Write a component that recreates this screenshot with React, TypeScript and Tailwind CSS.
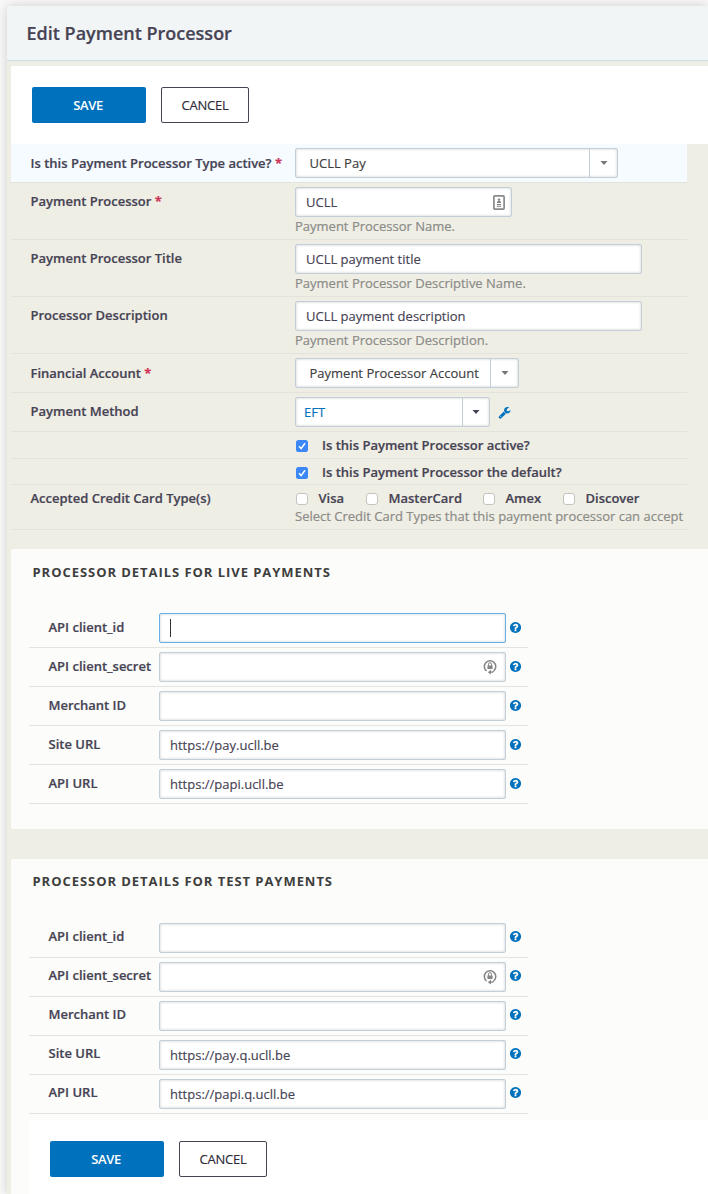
import type { ReactNode } from "react";

const LABEL = "text-[13px] leading-[18px] font-semibold text-[#464354] whitespace-nowrap [-webkit-text-stroke:0.2px_#464354]";
const FIELD =
  "flex h-[30px] items-center rounded-[2px] border bg-white text-[13px] text-[#464354] whitespace-nowrap [-webkit-text-stroke:0.15px_currentColor] shadow-[inset_0_0_3px_rgba(0,0,0,0.2)]";

function HelpIcon() {
  return (
    <svg viewBox="0 0 1792 1792" className="size-[13px] fill-[#0071bd]">
      <path d="M1024 1376v-192q0-14-9-23t-23-9h-192q-14 0-23 9t-9 23v192q0 14 9 23t23 9h192q14 0 23-9t9-23zM1280 704q0-88-55.5-163t-138.5-116-170-41q-243 0-371 213-15 24 8 42l132 100q7 6 19 6 16 0 25-12 53-68 86-92 34-24 86-24 48 0 85.5 26t37.5 59q0 38-20 61t-68 45q-63 28-115.5 86.5t-52.5 125.5v36q0 14 9 23t23 9h192q14 0 23-9t9-23q0-19 21.5-49.5t54.5-49.5q32-18 49-28.5t46-35 44.5-48 28-60.5 12.5-81zM1664 896q0 209-103 385.5t-279.5 279.5-385.5 103-385.5-103-279.5-279.5-103-385.5 103-385.5 279.5-279.5 385.5-103 385.5 103 279.5 279.5 103 385.5z" />
    </svg>
  );
}

function WrenchIcon() {
  return (
    <svg viewBox="0 0 1792 1792" className="size-[13px] fill-[#0071bd]">
      <path d="M448 1472q0-26-19-45t-45-19-45 19-19 45 19 45 45 19 45-19 19-45zm644-420l-682 682q-37 37-90 37-52 0-91-37l-106-108q-38-36-38-90 0-53 38-91l681-681q39 98 114.5 173.5t173.5 114.5zm634-435q0 39-23 106-47 134-164.5 217.5t-258.5 83.5q-185 0-316.5-131.5t-131.5-316.5 131.5-316.5 316.5-131.5q58 0 121.5 16.5t107.5 46.5q16 11 16 28t-16 28l-293 169v224l193 107q5-3 79-48.5t135.5-81 70.5-35.5q15 0 23.5 10t8.5 25z" />
    </svg>
  );
}

function ContactIcon() {
  return (
    <svg viewBox="0 0 12 15" className="h-[15px] w-[12px]">
      <rect x="0.9" y="0.9" width="10.2" height="13.2" rx="0.8" fill="#fff" stroke="#8a8a8a" strokeWidth="1.7" />
      <circle cx="6" cy="4.6" r="1.2" fill="#808080" />
      <path d="M4 8V7l1.2-1.3h1.6L8 7v1zM3.8 9h4.4v1H3.8zM3.8 10.7h4.4v1H3.8z" fill="#808080" />
    </svg>
  );
}

function LockIcon() {
  return (
    <svg viewBox="0 0 14 16" className="h-[16px] w-[14px]" fill="none">
      <path d="M3.6 12A5.7 5.7 0 1 1 11 11.6" stroke="#858585" strokeWidth="1.5" />
      <path d="M7.6 13.2H9.6L11 11.6" stroke="#858585" strokeWidth="1.3" />
      <path d="M8 10.8v4.8L4.8 13.2z" fill="#858585" />
      <path d="M5.5 7V5.2a1.5 1.5 0 0 1 3 0V7" stroke="#858585" />
      <rect x="4.4" y="6.4" width="5.2" height="3.6" rx=".4" fill="#858585" />
    </svg>
  );
}

function Buttons() {
  return (
    <div className="flex gap-[15px] text-[13px] leading-none">
      <button className="h-9 w-[114px] rounded-[2px] bg-[#0071bd] pt-px pr-[2px] font-semibold tracking-[-0.35px] text-white">SAVE</button>
      <button className="h-9 w-[88px] rounded-[2px] border border-[#464354] bg-white pt-px tracking-[-0.2px] text-[#2d2b35] [-webkit-text-stroke:0.15px_currentColor]">CANCEL</button>
    </div>
  );
}

function Row({ label, required, height, pad = "pt-[10px]", active, children }: {
  label?: string; required?: boolean; height: string; pad?: string; active?: boolean; children: ReactNode;
}) {
  return (
    <div className={`flex w-[676px] border-b ${height} ${active ? "border-[#e0e3df] bg-[#f5fbff]" : "border-[#e3e3dd]"}`}>
      <div className={`w-[284px] shrink-0 pl-[19.5px] ${pad} ${LABEL}`}>
        {label}
        {required && <span className="font-bold text-[#cf3458] [-webkit-text-stroke:0.2px_#cf3458]"> *</span>}
      </div>
      <div className="min-w-0 flex-1">{children}</div>
    </div>
  );
}

function Select({ value, width, arrow, dark }: { value: string; width: string; arrow: string; dark?: boolean }) {
  return (
    <div className={`${FIELD} border-[#c2cfd8] ${width}`}>
      <span className={`flex-1 pt-px ${dark ? "pl-2 text-[#0071bd]" : "pl-[13.5px] text-[#3e3e3e]"}`}>{value}</span>
      <span className={`flex h-full items-center justify-center border-l border-[#c2cfd8] ${arrow}`}>
        <svg viewBox="0 0 8 4" className="h-1 w-2">
          <path d="M0.5 0h7L4 4z" fill={dark ? "#464354" : "#777"} />
        </svg>
      </span>
    </div>
  );
}

function Hint({ children }: { children: ReactNode }) {
  return <div className="text-[13px] leading-[18px] whitespace-nowrap text-[#8b8b88] [-webkit-text-stroke:0.2px_currentColor]">{children}</div>;
}

function Check({ on }: { on?: boolean }) {
  return on ? (
    <svg viewBox="0 0 12 12" className="size-3 shrink-0">
      <rect width="12" height="12" rx="2.5" fill="#3b87f7" />
      <path d="M3 6.3l2.1 2.3L9 3.3" fill="none" stroke="#fff" strokeWidth="1.5" />
    </svg>
  ) : (
    <span className="size-3 shrink-0 rounded-[3px] border border-[#c4c4c1] bg-white" />
  );
}

function CheckRow({ text, height }: { text: string; height: string }) {
  return (
    <Row height={height}>
      <div className={`flex gap-[14.5px] pt-1 pl-[0.5px] ${LABEL}`}>
        <span className="flex pt-1"><Check on /></span>
        {text}
      </div>
    </Row>
  );
}

const cards = [
  { name: "Visa", width: "w-[70px]" },
  { name: "MasterCard", width: "w-[117px]" },
  { name: "Amex", width: "w-[80px]" },
  { name: "Discover", width: "w-[80px]" },
];

const live = { heading: "pt-[14px]", label: "pt-[5px]", help: "pt-2" };
const test = { heading: "pt-[13px]", label: "pt-1", help: "pt-[7px]" };

function Details({ title, site, api, focused, pads }: {
  title: string; site: string; api: string; focused?: boolean; pads: typeof live;
}) {
  const rows = [
    { label: "API client_id", value: "", focus: focused },
    { label: "API client_secret", value: "", lock: true },
    { label: "Merchant ID", value: "" },
    { label: "Site URL", value: site },
    { label: "API URL", value: api },
  ];
  return (
    <>
      <h2 className={`h-[60px] pl-[21.5px] text-[13px] leading-[18px] font-bold tracking-[0.95px] text-[#3e3e3e] uppercase ${pads.heading}`}>{title}</h2>
      <div className="ml-[18px] w-[499px]">
        {rows.map((r) => (
          <div key={r.label} className="flex h-[39px] border-b border-[#e3e3df] pt-1">
            <div className={`w-[130px] pl-[19.5px] ${pads.label} ${LABEL}`}>{r.label}</div>
            <div className={`${FIELD} w-[347px] justify-between pr-[8px] pl-[10px] ${r.focus ? "border-[#66afe9]" : "border-[#c2cfd8]"}`}>
              {r.focus ? <span className="h-[18px] w-px bg-[#333]" /> : <span className="pt-px">{r.value}</span>}
              {r.lock && <LockIcon />}
            </div>
            <div className={`pl-[2.5px] ${pads.help}`}><HelpIcon /></div>
          </div>
        ))}
      </div>
    </>
  );
}

export default function App() {
  return (
    <div className="h-[1194px] w-[708px] overflow-hidden bg-[#f9f9f9] pt-[6px] pl-[7px] font-['Open_Sans',sans-serif]">
      <div className="h-[1188px] rounded-tl-[3px] bg-[#efeee5] shadow-[0_0_12px_rgba(0,0,0,0.18)]">
        <header className="h-[55px] rounded-tl-[3px] border-b border-[#cddde6] bg-[#f2f5f6] pt-[15px] pl-[19.5px] text-[18px] leading-6 font-semibold text-[#464354] [-webkit-text-stroke:0.2px_#464354]">
          Edit Payment Processor
        </header>
        <main className="pt-[5px] pl-1">
          <div className="h-[78px] bg-white pt-[21px] pl-[21px]"><Buttons /></div>
          <Row label="Is this Payment Processor Type active?" required height="h-[39px]" active>
            <div className="pt-1"><Select value="UCLL Pay" width="w-[323px]" arrow="w-[28px]" /></div>
          </Row>
          <Row label="Payment Processor" required height="h-[57px]" pad="pt-[9px]">
            <div className="pt-1">
              <div className={`${FIELD} w-[217px] justify-between border-[#c2cfd8] pr-[6px] pl-[10px]`}><span className="pt-px">UCLL</span><ContactIcon /></div>
              <Hint>Payment Processor Name.</Hint>
            </div>
          </Row>
          <Row label="Payment Processor Title" height="h-[57px]" pad="pt-[9px]">
            <div className="pt-1">
              <div className={`${FIELD} w-[347px] border-[#c2cfd8] pl-[10px]`}><span className="pt-px">UCLL payment title</span></div>
              <Hint>Payment Processor Descriptive Name.</Hint>
            </div>
          </Row>
          <Row label="Processor Description" height="h-[57px]" pad="pt-[9px]">
            <div className="pt-1">
              <div className={`${FIELD} w-[347px] border-[#c2cfd8] pl-[10px]`}><span className="pt-px">UCLL payment description</span></div>
              <Hint>Payment Processor Description.</Hint>
            </div>
          </Row>
          <Row label="Financial Account" required height="h-[39px]">
            <div className="pt-1"><Select value="Payment Processor Account" width="w-[224px]" arrow="w-[28px]" /></div>
          </Row>
          <Row label="Payment Method" height="h-[39px]" pad="pt-[9px]">
            <div className="flex items-center gap-[8px] pt-1">
              <Select value="EFT" width="w-[195px]" arrow="w-[27px]" dark />
              <WrenchIcon />
            </div>
          </Row>
          <CheckRow text="Is this Payment Processor active?" height="h-[27px]" />
          <CheckRow text="Is this Payment Processor the default?" height="h-[26px]" />
          <Row label="Accepted Credit Card Type(s)" height="h-[45px]" pad="pt-1">
            <div className={`flex pt-1 pl-[0.5px] ${LABEL}`}>
              {cards.map((c) => (
                <span key={c.name} className={`flex gap-[11px] ${c.width}`}><span className="flex pt-1"><Check /></span>{c.name}</span>
              ))}
            </div>
            <Hint>Select Credit Card Types that this payment processor can accept</Hint>
          </Row>
          <section className="mt-[19px] h-[280px] rounded-l-[2px] bg-[#fcfcfa]">
            <Details title="Processor details for live payments" site="https://pay.ucll.be" api="https://papi.ucll.be" focused pads={live} />
          </section>
          <section className="mt-[30px] h-[335px] rounded-tl-[2px] bg-[#fcfcfa]">
            <Details title="Processor details for test payments" site="https://pay.q.ucll.be" api="https://papi.q.ucll.be" pads={test} />
            <div className="mt-[6px] ml-[18px] h-[74px] bg-white pt-[21px] pl-[21px]"><Buttons /></div>
          </section>
        </main>
      </div>
    </div>
  );
}
